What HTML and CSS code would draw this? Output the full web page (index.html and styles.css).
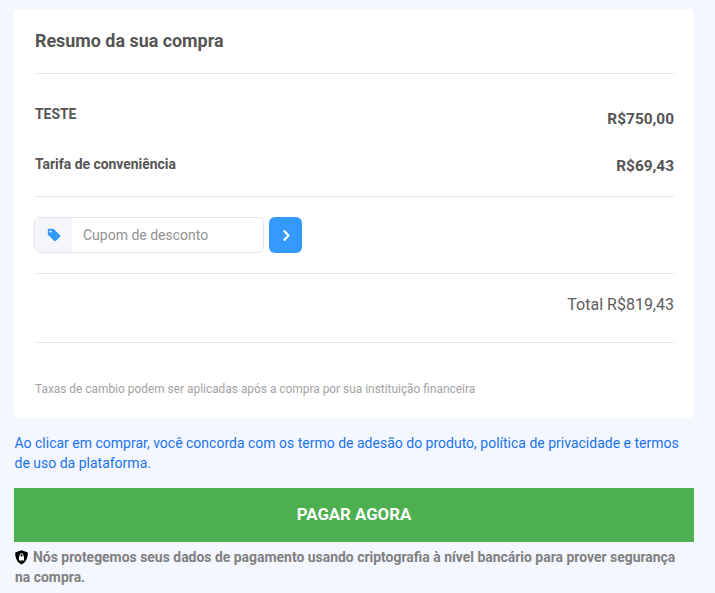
FILE: index.html
```html
<!DOCTYPE html>
<html lang="pt-BR">
<head>
<meta charset="utf-8">
<title>Resumo da sua compra</title>
<link rel="stylesheet" href="styles.css">
</head>
<body>
<main class="page">
  <section class="card">
    <h2 class="title">Resumo da sua compra</h2>
    <div class="rows">
      <div class="row row-first"><span class="label">TESTE</span><span class="price price-first">R$750,00</span></div>
      <div class="row row-second"><span class="label">Tarifa de conveniência</span><span class="price price-second">R$69,43</span></div>
    </div>
    <div class="coupon">
      <div class="coupon-field">
        <span class="coupon-icon">
          <svg width="14" height="14" viewBox="0 0 14 14"><path fill="#3399ff" fill-rule="evenodd" d="M.8 2.200C.8 1.400 1.400.8 2.200.8H6c.4 0 .7.2 1 .4l5.800 5.800c.5.5.5 1.400 0 2l-3.800 3.800c-.6.5-1.500.5-2 0L1.200 7c-.3-.3-.4-.6-.4-1V2.200zM3.600 4.700a1.100 1.100 0 1 0 0-2.200 1.100 1.100 0 0 0 0 2.200z"/></svg>
        </span>
        <span class="coupon-placeholder">Cupom de desconto</span>
      </div>
      <button class="coupon-btn" type="button" aria-label="Aplicar">
        <svg width="10" height="13" viewBox="0 0 10 13"><path d="M2.800 1.500 7.400 6.500 2.800 11.500" fill="none" stroke="#fff" stroke-width="2.300"/></svg>
      </button>
    </div>
    <div class="total">Total R$819,43</div>
    <p class="note">Taxas de cambio podem ser aplicadas após a compra por sua instituição financeira</p>
  </section>
  <p class="terms">Ao clicar em comprar, você concorda com os termo de adesão do produto, política de privacidade e termos de uso da plataforma.</p>
  <button class="pay" type="button">PAGAR AGORA</button>
  <p class="secure"><svg class="shield" width="13" height="15" viewBox="0 0 13 15"><path fill="#000" d="M6.500.2 12.200 2.200c.4.100.6.400.6.800 0 5-1.800 9.200-6.300 11.600C2 12.200.2 8 .2 3c0-.4.200-.7.600-.8z"/><rect x="4" y="6.300" width="5" height="4.200" rx=".6" fill="#fff"/><path d="M5 6.500V5.200a1.500 1.500 0 0 1 3 0v1.300" fill="none" stroke="#fff"/></svg> Nós protegemos seus dados de pagamento usando criptografia à nível bancário para prover segurança na compra.</p>
</main>
</body>
</html>
```
FILE: styles.css
```css
* { box-sizing: border-box; }
html, body { margin: 0; height: 100%; }
body {
  background: #f4f7ff;
  font-family: Roboto, "Liberation Sans", sans-serif;
  overflow: hidden;
}
.page { padding: 9px 21px 0 14px; }
.card {
  background: #fff;
  border-radius: 6px;
  padding: 0 20px;
  height: 409px;
}
.title {
  margin: 0;
  height: 65px;
  border-bottom: 1px solid #e6e6e6;
  padding: 20px 0 0 1px;
  font-size: 17.9px;
  line-height: 24px;
  font-weight: 700;
  color: #555;
}
.rows {
  height: 123px;
  border-bottom: 1px solid #e6e6e6;
}
.row {
  display: flex;
  justify-content: space-between;
  color: #555;
  font-weight: 700;
}
.row-first { padding-top: 30px; }
.row-second { padding-top: 25px; }
.label { font-size: 13.9px; line-height: 20px; padding-left: 1px; }
.price { font-size: 15.4px; line-height: 20px; }
.price-first { padding-top: 5px; }
.price-second { padding-top: 2px; }
.coupon {
  display: flex;
  gap: 5px;
  height: 77px;
  padding-top: 20px;
  border-bottom: 1px solid #e6e6e6;
}
.coupon-field {
  width: 230px;
  height: 36px;
  display: flex;
  align-items: center;
  border: 1px solid #e3e5eb;
  border-radius: 6px;
  overflow: hidden;
}
.coupon-icon {
  width: 37px;
  height: 100%;
  background: #f5f6fa;
  display: flex;
  align-items: center;
  justify-content: center;
}
.coupon-placeholder {
  padding-left: 11px;
  font-size: 14px;
  color: #929292;
}
.coupon-btn {
  width: 33px;
  height: 36px;
  padding: 0;
  border: 0;
  border-radius: 6px;
  background: #3399ff;
  display: flex;
  align-items: center;
  justify-content: center;
}
.total {
  height: 69px;
  padding-top: 20px;
  text-align: right;
  font-size: 16px;
  line-height: 21px;
  color: #5c5c5c;
  border-bottom: 1px solid #e6e6e6;
}
.note {
  margin: 0;
  padding: 38px 0 0 1px;
  font-size: 11.9px;
  line-height: 16px;
  color: #a3a3a3;
}
.terms {
  margin: 15px 0 0;
  padding-left: .5px;
  font-size: 14px;
  line-height: 20px;
  color: #1a73e8;
}
.pay {
  display: block;
  width: 100%;
  height: 54px;
  margin-top: 15px;
  padding: 0 0 2px;
  border: 0;
  background: #4caf50;
  color: #fff;
  font-family: inherit;
  font-size: 16.8px;
  font-weight: 700;
}
.secure {
  margin: 5px 0 0;
  padding-left: 1px;
  font-size: 13.95px;
  line-height: 20px;
  font-weight: 700;
  color: #808080;
}
.shield { vertical-align: -3px; margin-right: 1.500px; }
```
